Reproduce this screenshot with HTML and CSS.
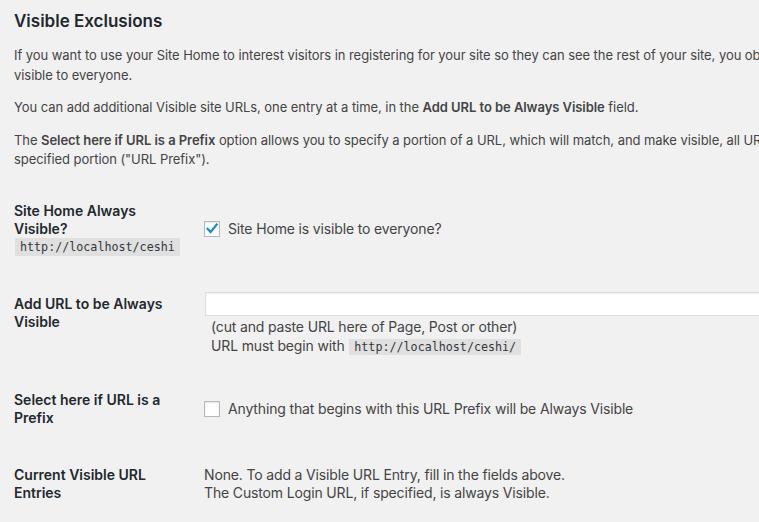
FILE: index.html
```html
<!DOCTYPE html>
<html lang="en">
<head>
<meta charset="utf-8">
<title>Visible Exclusions</title>
<link rel="stylesheet" href="styles.css">
</head>
<body>
<div class="wrap">
  <h2 class="title">Visible Exclusions</h2>
  <p>If you want to use your Site Home to interest visitors in registering for your site so they can see the rest of your site, you obviously need Site Home to be<br>visible to everyone.</p>
  <p>You can add additional Visible site URLs, one entry at a time, in the <strong>Add URL to be Always Visible</strong> field.</p>
  <p>The <strong>Select here if URL is a Prefix</strong> option allows you to specify a portion of a URL, which will match, and make visible, all URLs that begin with the<br>specified portion ("URL Prefix").</p>

  <div class="form-table">
    <div class="row">
      <div class="th">Site Home Always<br>Visible?<code class="th-code">http://localhost/ceshi</code></div>
      <div class="td">
        <label class="check">
          <span class="box"><svg viewBox="0 0 16 16" width="16" height="16"><path d="M3.6 7.9 L6.6 11.1 L12.6 3.6" fill="none" stroke="#1e8cbe" stroke-width="2.3" stroke-linecap="square" stroke-linejoin="miter"/></svg></span>
          <span>Site Home is visible to everyone?</span>
        </label>
      </div>
    </div>

    <div class="row">
      <div class="th">Add URL to be Always<br>Visible</div>
      <div class="td">
        <input class="url-input" type="text" value="">
        <div class="desc">(cut and paste URL here of Page, Post or other)<br>URL must begin with <code>http://localhost/ceshi/</code></div>
      </div>
    </div>

    <div class="row">
      <div class="th">Select here if URL is a<br>Prefix</div>
      <div class="td">
        <label class="check">
          <span class="box"></span>
          <span>Anything that begins with this URL Prefix will be Always Visible</span>
        </label>
      </div>
    </div>

    <div class="row">
      <div class="th">Current Visible URL<br>Entries</div>
      <div class="td">None. To add a Visible URL Entry, fill in the fields above.<br>The Custom Login URL, if specified, is always Visible.</div>
    </div>
  </div>
</div>
</body>
</html>
```

FILE: styles.css
```css
html, body {
  margin: 0;
  padding: 0;
  background: #f1f1f1;
  overflow: hidden;
}

body {
  font-family: Inter, "Noto Sans", "Liberation Sans", sans-serif;
  font-size: 13px;
  line-height: 1.5;
  color: #444;
}

.wrap {
  width: 1100px;
  padding: 10px 0 0 14px;
}

.title {
  margin: 0 0 14px;
  font-size: 17px;
  line-height: 22px;
  font-weight: 600;
  color: #23282d;
}

p {
  margin: 13px 0;
  line-height: 19.5px;
  letter-spacing: -0.06px;
}

p strong {
  font-weight: 600;
  color: #444;
}

code {
  font-family: "DejaVu Sans Mono", "Liberation Mono", monospace;
  font-size: 11.7px;
  letter-spacing: 0;
  background: rgba(0, 0, 0, 0.07);
  padding: 1px 5px 1px;
  margin: 0 1px;
  color: #32373c;
}

.th-code {
  display: block;
  width: fit-content;
  margin-top: 0;
  line-height: 16px;
  font-weight: 400;
}

.row {
  display: grid;
  grid-template-columns: 180px 1fr;
}

.th {
  align-self: start;
  padding: 19px 10px 20px 0;
  font-size: 14px;
  line-height: 18px;
  font-weight: 600;
  color: #23282d;
}

.td {
  align-self: center;
  padding: 15px 10px;
  font-size: 14px;
  line-height: 18px;
  letter-spacing: -0.15px;
}

.check {
  display: flex;
  align-items: center;
  gap: 8px;
}

.box {
  width: 16px;
  height: 16px;
  box-sizing: border-box;
  border: 1px solid #b4b9be;
  background: #fff;
  box-shadow: inset 0 1px 2px rgba(0, 0, 0, 0.1);
  display: flex;
  align-items: center;
  justify-content: center;
  flex: none;
}

.box svg {
  display: block;
  margin: -1px;
}

.url-input {
  display: block;
  box-sizing: border-box;
  width: 700px;
  height: 24px;
  margin: 1px 1px 0;
  padding: 3px 5px;
  border: 1px solid #ddd;
  box-shadow: inset 0 1px 2px rgba(0, 0, 0, 0.07);
  background: #fff;
  font: inherit;
  outline: none;
}

.desc {
  margin-top: 1px;
  padding-left: 7px;
  line-height: 19px;
}
```
